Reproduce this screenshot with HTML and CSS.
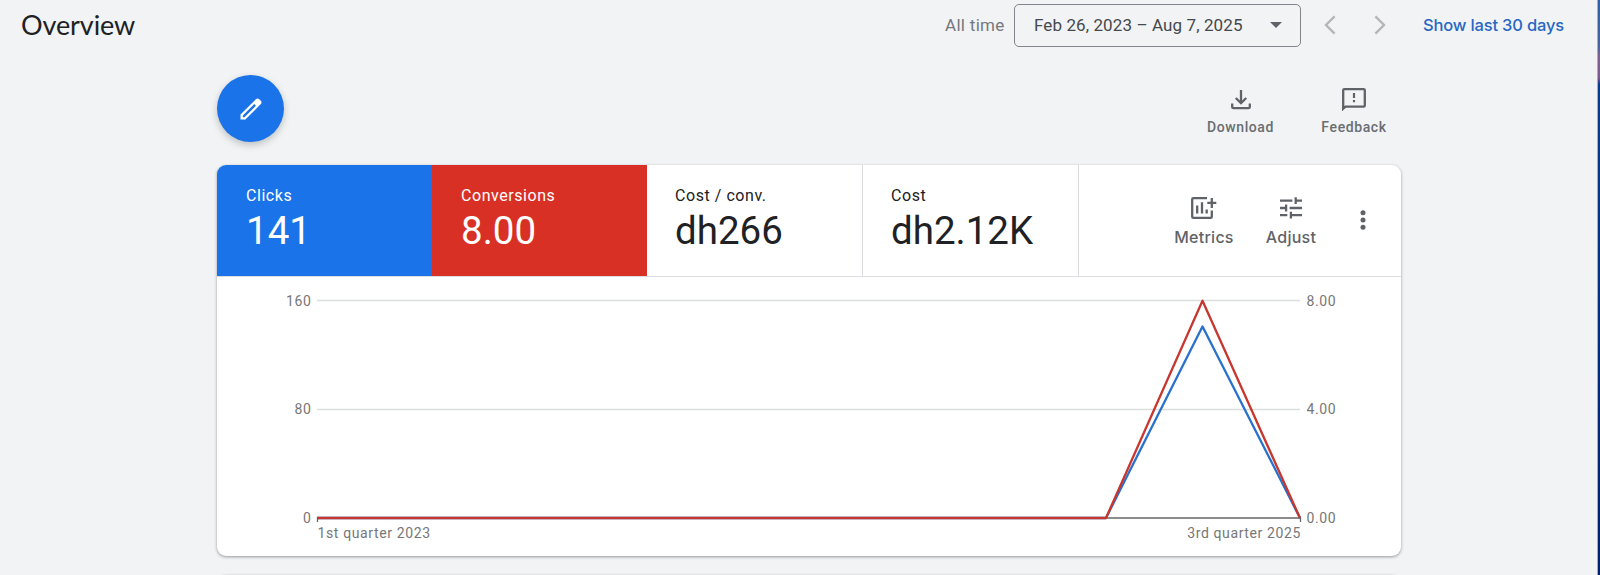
FILE: index.html
```html
<!DOCTYPE html>
<html lang="en">
<head>
<meta charset="utf-8">
<title>Overview</title>
<link rel="stylesheet" href="styles.css">
</head>
<body>
<div class="page">
  <header class="topbar">
    <h1 class="title">Overview</h1>
    <span class="range-name">All time</span>
    <div class="date-picker">
      <span class="date-text">Feb 26, 2023 – Aug 7, 2025</span>
      <svg class="caret" width="12" height="6" viewBox="0 0 12 6"><path d="M0 0h12L6 6z"/></svg>
    </div>
    <svg class="chevron prev" width="12" height="20" viewBox="0 0 12 20"><path d="M10.600 1.400 2 10l8.600 8.600"/></svg>
    <svg class="chevron next" width="12" height="20" viewBox="0 0 12 20"><path d="M1.400 1.400 10 10l-8.600 8.600"/></svg>
    <a class="show-last">Show last 30 days</a>
  </header>
  <main class="content">
    <div class="toolbar">
      <div class="fab">
        <svg width="28" height="28" viewBox="0 0 24 24"><path d="M20.410 4.940l-1.350-1.350c-.78-.78-2.050-.78-2.830 0L3 16.820V21h4.180L20.410 7.770c.79-.78.79-2.050 0-2.830zM6.410 19.060 5 19v-1.360l9.820-9.830 1.410 1.410z"/></svg>
      </div>
      <div class="tool download">
        <svg width="20" height="20" viewBox="0 0 20 20"><path class="line" d="M10 0v12.500M4.800 8l5.200 5.200L15.200 8M1.200 13.400v3.500q0 1.300 1.300 1.300h15q1.300 0 1.300-1.300v-3.500"/></svg>
        <span>Download</span>
      </div>
      <div class="tool feedback">
        <svg width="24" height="24" viewBox="0 0 24 24"><path class="line" d="M1.200 20.600V2.300q0-1.100 1.100-1.100h19.400q1.100 0 1.100 1.100v15.200q0 1.100-1.100 1.100H3.600z"/><path d="M10.900 5h2.200v5h-2.200zM10.900 12h2.200v2.200h-2.200zM0 18v5.300L4.600 18z"/></svg>
        <span>Feedback</span>
      </div>
    </div>
    <section class="card">
      <div class="scorecards">
        <div class="score clicks"><span class="label">Clicks</span><span class="value">141</span></div>
        <div class="score conversions"><span class="label">Conversions</span><span class="value">8.00</span></div>
        <div class="score"><span class="label">Cost / conv.</span><span class="value">dh266</span></div>
        <div class="score"><span class="label">Cost</span><span class="value">dh2.12K</span></div>
        <div class="actions">
          <div class="action metrics">
            <svg width="26" height="22" viewBox="0 0 26 22"><path class="line" d="M16 1.200H2.300q-1.100 0-1.100 1.100v17.400q0 1.100 1.100 1.100h17.400q1.100 0 1.100-1.100v-6.200M6.200 8.500v8M11 5.200v11.300M15.700 12.500v4M20.800 1v10M16.300 5.900h9"/></svg>
            <span>Metrics</span>
          </div>
          <div class="action adjust">
            <svg width="22" height="22" viewBox="0 0 22 22"><path class="line" d="M0 3.700h12.400M15.700.3v6.800M15.700 3.700H22M0 11h7M6.100 7.600v6.800M9.600 11H22M0 18.200h7.300M10.900 14.800v6.800M10.900 18.200H22"/></svg>
            <span>Adjust</span>
          </div>
          <svg class="more" width="6" height="20" viewBox="0 0 6 20"><circle cx="3" cy="2.800" r="2.500"/><circle cx="3" cy="10" r="2.500"/><circle cx="3" cy="17.200" r="2.500"/></svg>
        </div>
      </div>
      <svg class="chart" width="1184" height="279" viewBox="217 277 1184 279">
        <path class="grid" d="M317 300.500H1300M317 409.500H1300"/>
        <path class="axis" d="M317.500 522v-4H1300.500v4"/>
        <path class="series blue" d="M317 518H1106L1202.500 326.500 1300 518"/>
        <path class="series red" d="M317 518H1106L1202.500 300.800 1300 518"/>
        <g class="ticks end">
          <text x="311.500" y="305.500">160</text>
          <text x="311.500" y="414">80</text>
          <text x="311.500" y="522.500">0</text>
          <text x="1301" y="538">3rd quarter 2025</text>
        </g>
        <g class="ticks">
          <text x="1306.500" y="305.500">8.00</text>
          <text x="1306.500" y="414">4.00</text>
          <text x="1306.500" y="522.500">0.00</text>
          <text x="317.500" y="538">1st quarter 2023</text>
        </g>
      </svg>
    </section>
    <section class="card next-card"></section>
  </main>
</div>
<div class="edge"></div>
</body>
</html>
```
FILE: styles.css
```css
* { box-sizing: border-box; }
body {
  margin: 0;
  height: 575px;
  overflow: hidden;
  display: flex;
  background: #f1f3f4;
  font-family: Roboto, "Liberation Sans", sans-serif;
  color: #202124;
}
.page { width: 1597px; height: 575px; overflow: hidden; }
.edge {
  width: 3px;
  height: 575px;
  border-left: 1px solid #8fb4dc;
  background: linear-gradient(#2f62a8 0, #4a629c 46px, #806091 56px, #80598b 78px, #0b3c8b 84px, #062f80 300px, #02206c 575px);
}
.topbar { display: flex; align-items: center; height: 50px; padding-left: 20px; }
.title {
  margin: 0;
  width: 925px;
  padding-left: 1px;
  font: 400 27px/50px Lato, sans-serif;
  letter-spacing: -0.1px;
}
.range-name { width: 69px; font-size: 17px; letter-spacing: 0.300px; color: #75787c; }
.date-picker {
  display: flex;
  align-items: center;
  justify-content: space-between;
  width: 287px;
  height: 43px;
  padding: 0 18px 0 19px;
  border: 1px solid #80868b;
  border-radius: 5px;
}
.date-text { font-size: 17px; letter-spacing: 0.100px; color: #45484c; white-space: nowrap; }
.caret { fill: #5f6368; }
.chevron { fill: none; stroke: #b4b6b8; stroke-width: 2.400; }
.prev { margin-left: 23px; }
.next { margin-left: 38px; }
.show-last { margin-left: 37px; font: 500 16.500px/24px Inter, sans-serif; letter-spacing: -0.170px; color: #2767c4; white-space: nowrap; }
.content { width: 1184px; margin-left: 217px; }
.toolbar { display: flex; height: 115px; padding-top: 25px; }
.fab {
  display: flex;
  flex: none;
  align-items: center;
  justify-content: center;
  width: 67px;
  height: 67px;
  margin-right: 911px;
  border-radius: 50%;
  background: #1a73e8;
  box-shadow: 0 3px 7px rgba(60, 64, 67, .28);
}
.fab svg { fill: #fff; }
.tool {
  display: flex;
  flex: none;
  flex-direction: column;
  align-items: center;
  width: 91px;
  color: #6a6d71;
  font-size: 14px;
  font-weight: 500;
  line-height: 20px;
  letter-spacing: 0.600px;
}
.tool svg, .action svg, .more { fill: #5f6368; }
.line { fill: none; stroke: #5f6368; stroke-width: 2.300; }
.download { padding-top: 15px; gap: 7px; }
.feedback { width: 90px; margin-left: 23px; padding-top: 13px; gap: 5px; }
.card {
  height: 391px;
  border-radius: 9px;
  overflow: hidden;
  background: #fff;
  box-shadow: 0 1px 3px rgba(60, 64, 67, .5);
}
.next-card { height: 40px; margin-top: 19px; }
.scorecards { display: flex; height: 112px; border-bottom: 1px solid #dadce0; }
.score {
  display: flex;
  flex-direction: column;
  width: 216px;
  padding: 21px 0 0 28px;
  border-right: 1px solid #dadce0;
}
.clicks { width: 215px; padding-left: 29px; background: #1a73e8; color: #fff; border: 0; }
.conversions { width: 215px; padding-left: 29px; background: #d93025; color: #fff; border: 0; }
.label { font-size: 16px; line-height: 20px; letter-spacing: 0.550px; }
.value { font-size: 38.500px; line-height: 50px; }
.actions { display: flex; align-items: flex-start; padding-top: 32px; }
.action {
  display: flex;
  flex-direction: column;
  align-items: center;
  gap: 6px;
  color: #5f6368;
  font: 500 16px/24px Inter, sans-serif;
  letter-spacing: 0.250px;
}
.metrics { width: 80px; margin-left: 85px; }
.adjust { width: 80px; margin-left: 7px; }
.more { margin: 13px 0 0 29px; }
.chart { display: block; }
.grid { stroke: #dcdddf; stroke-width: 1.300; }
.axis { fill: none; stroke: #666; stroke-width: 1.300; }
.series { fill: none; stroke-width: 2.300; stroke-linejoin: round; }
.blue { stroke: #2871cc; }
.red { stroke: #c7372f; }
.ticks { fill: #777; font-size: 14px; letter-spacing: 0.620px; }
.end { text-anchor: end; }
```
